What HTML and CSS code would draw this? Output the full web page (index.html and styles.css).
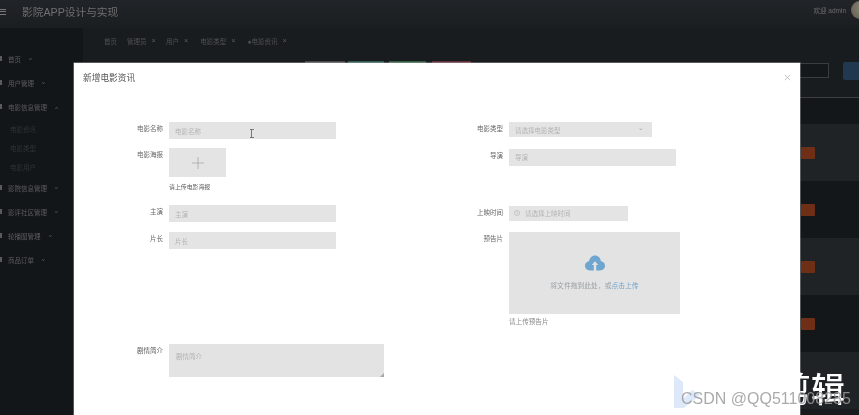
FILE: index.html
```html
<!DOCTYPE html>
<html lang="zh">
<head>
<meta charset="utf-8">
<title>影院APP设计与实现</title>
<link rel="stylesheet" href="styles.css">
</head>
<body>
<div class="screen">
  <header class="topbar">
    <div class="burger"><i></i><i></i><i></i></div>
    <div class="brand">影院APP设计与实现</div>
    <div class="welcome">欢迎 admin</div>
    <div class="avatar"></div>
  </header>
  <div class="body-row">
    <nav class="sidebar">
      <div class="menu-item"><b class="mi"></b>首页<span class="chev">⌄</span></div>
      <div class="menu-item"><b class="mi"></b>用户管理<span class="chev">⌄</span></div>
      <div class="menu-item"><b class="mi"></b>电影信息管理<span class="chev up">⌄</span></div>
      <div class="sub-item">电影资讯</div>
      <div class="sub-item">电影类型</div>
      <div class="sub-item">电影用户</div>
      <div class="menu-item"><b class="mi"></b>影院信息管理<span class="chev">⌄</span></div>
      <div class="menu-item"><b class="mi"></b>影评社区管理<span class="chev">⌄</span></div>
      <div class="menu-item"><b class="mi"></b>轮播图管理<span class="chev">⌄</span></div>
      <div class="menu-item"><b class="mi"></b>商品订单<span class="chev">⌄</span></div>
    </nav>
    <main class="main">
      <div class="tabs">
        <span class="tab">首页</span>
        <span class="tab">管理员<em>×</em></span>
        <span class="tab">用户<em>×</em></span>
        <span class="tab">电影类型<em>×</em></span>
        <span class="tab">●电影资讯<em>×</em></span>
      </div>
      <div class="toolbar">
        <span class="tb b1"></span><span class="tb b2"></span><span class="tb b3"></span><span class="tb b4"></span>
        <span class="search"></span>
        <span class="search-btn"></span>
      </div>
      <div class="table">
        <div class="thead"></div>
        <div class="trow odd"><span class="op"></span></div>
        <div class="trow"><span class="op"></span></div>
        <div class="trow odd"><span class="op"></span></div>
        <div class="trow"><span class="op"></span></div>
        <div class="trow odd"></div>
      </div>
    </main>
  </div>

  <section class="modal">
    <div class="modal-head">
      <h2 class="modal-title">新增电影资讯</h2>
      <svg class="close" viewBox="0 0 8 8" width="7" height="7"><path d="M1 1L7 7M7 1L1 7" stroke="#aaa" stroke-width=".8"/></svg>
    </div>
    <div class="form-grid">
      <div class="col">
        <div class="row r-name"><label class="lab">电影名称</label><div class="field w167 h17">电影名称</div></div>
        <div class="row r-poster"><label class="lab">电影海报</label>
          <div class="field-stack">
            <div class="poster"><svg viewBox="0 0 12 12" width="12" height="12"><path d="M6 0V12M0 6H12" stroke="#a0a0a0" stroke-width=".7"/></svg></div>
            <div class="hint dark">请上传电影海报</div>
          </div>
        </div>
        <div class="row r-actor"><label class="lab">主演</label><div class="field w167 h17">主演</div></div>
        <div class="row r-len"><label class="lab">片长</label><div class="field w167 h17">片长</div></div>
      </div>
      <div class="col">
        <div class="row r-name"><label class="lab">电影类型</label><div class="field w143 h15 between">请选择电影类型<span class="sel">⌄</span></div></div>
        <div class="row r-dir"><label class="lab">导演</label><div class="field w167 h17">导演</div></div>
        <div class="row r-date"><label class="lab">上映时间</label><div class="field w119 h15 time"><svg viewBox="0 0 8 8" width="6" height="6"><circle cx="4" cy="4" r="3.4" fill="none" stroke="#aaa" stroke-width=".7"/><path d="M4 2V4.2H5.6" fill="none" stroke="#aaa" stroke-width=".6"/></svg>请选择上映时间</div></div>
        <div class="row r-trailer"><label class="lab">预告片</label>
          <div class="field-stack">
            <div class="upload">
              <svg class="cloud" viewBox="0 0 20 16" width="20" height="16"><path d="M5 15.500C2 15.500 0 13.400 0 10.800 0 8.400 1.700 6.600 4 6.300 4.600 2.800 7 .5 10 .5c3 0 5.400 2.300 6 5.800 2.300.3 4 2.100 4 4.500 0 2.600-2 4.700-5 4.700H11.200V10h2l-3.200-3.800L6.800 10h2v5.500z" fill="#6fa6cf"/></svg>
              <div class="upload-text">将文件拖到此处，或<span class="link">点击上传</span></div>
            </div>
            <div class="hint wide">请上传预告片</div>
          </div>
        </div>
      </div>
    </div>
    <div class="row r-intro"><label class="lab dark2">剧情简介</label><div class="area">剧情简介<svg class="grip" viewBox="0 0 5 5" width="4" height="4"><path d="M5 0V5H0z" fill="#a8a8a8"/></svg></div></div>
  </section>

  <div class="cursor"></div>
  <div class="overlay-word">剪辑</div>
  <svg class="overlay-logo" viewBox="0 0 30 34" width="30" height="34"><path d="M0 0L9 7V24L18 15L26 20L10 33H0z" fill="#dde9fa"/></svg>
  <div class="watermark">CSDN @QQ511008285</div>
</div>
</body>
</html>
```
FILE: styles.css
```css
* { box-sizing: border-box; }
html, body { margin: 0; padding: 0; height: 100%; }
body { overflow: hidden; background: #16191c; }
.screen {
  position: relative;
  width: 859px;
  height: 415px;
  overflow: hidden;
  display: flex;
  flex-direction: column;
  font-family: "Liberation Sans", "Noto Sans CJK SC", sans-serif;
  font-size: 6.5px;
  color: #555;
  filter: blur(0.6px);
}
.topbar {
  height: 28px;
  flex: none;
  display: flex;
  align-items: center;
  background: linear-gradient(#212428, #1b1e21);
}
.burger { width: 6px; margin-right: 16px; display: flex; flex-direction: column; gap: 1.5px; margin-top: -5px; }
.burger i { display: block; height: 1px; background: #777; }
.brand { font-size: 10.7px; color: #6f6f6f; margin-top: -5px; }
.welcome { margin-left: auto; margin-right: 5px; color: #6c6c6c; margin-top: -8px; }
.avatar {
  width: 18px; height: 18px; border-radius: 50%; flex: none;
  margin-right: -10px; margin-top: -9px;
  background: radial-gradient(circle at 60% 40%, #8b8677, #5c5a4d);
}
.body-row { flex: 1; display: flex; min-height: 0; }
.sidebar { width: 83px; flex: none; background: #121619; padding-top: 19px; }
.menu-item {
  height: 24px; display: flex; align-items: center; padding-left: 8px;
  color: #5c5c5c; position: relative; white-space: nowrap;
}
.mi { position: absolute; left: -2px; top: 9px; width: 4px; height: 5px; background: #5a5a5a; }
.chev { margin-left: 6px; font-size: 8px; color: #4c4c4c; line-height: 1; margin-top: -3px; }
.chev.up { transform: rotate(180deg); margin-top: 3px; }
.sub-item { height: 19px; display: flex; align-items: center; padding-left: 10px; color: #303436; }
.main { flex: 1; background: #191c1f; display: flex; flex-direction: column; min-width: 0; }
.tabs { height: 33px; flex: none; padding: 0 0 8px 21px; display: flex; align-items: center; color: #4f5153; }
.tab { margin-right: 10px; white-space: nowrap; }
.tab:nth-child(3) { margin-right: 12px; }
.tab:nth-child(4) { margin-right: 12px; }
.tab em { font-style: normal; font-size: 7.5px; margin-left: 5px; position: relative; top: -1px; color: #5a5a5a; }
.toolbar { height: 37px; flex: none; display: flex; align-items: flex-start; position: relative; border-bottom: 1px solid #3c3e40; padding-left: 222px; }
.tb { height: 3px; width: 38px; margin-right: 5px; }
.b1 { background: #48494b; width: 40px; margin-right: 3px; }
.b2 { background: #335a57; width: 36px; }
.b3 { background: #355d41; width: 37px; margin-right: 6px; }
.b4 { background: #65313a; width: 39px; }
.search { position: absolute; left: 716px; top: 2px; width: 30px; height: 15px; border: 1px solid #3a3d3f; background: #15181a; }
.search-btn { position: absolute; left: 760px; top: 1px; width: 20px; height: 18px; border-radius: 2px; background: #20394f; }
.table { flex: 1; display: flex; flex-direction: column; }
.thead { height: 26px; flex: none; background: #14171a; }
.trow { height: 57px; flex: none; background: #14171a; padding-left: 718px; padding-top: 23px; }
.trow.odd { background: #1f2326; }
.op { display: block; width: 14px; height: 12px; background: #6e2f16; border-radius: 1px; }

.modal {
  position: absolute;
  left: 74px; top: 62.5px;
  width: 726px; height: 360px;
  background: #fff;
  box-shadow: 0 0 0 .6px rgba(200,200,200,.6);
}
.modal-head { height: 30px; padding: 9px 9px 0; display: flex; justify-content: space-between; align-items: flex-start; }
.modal-title { margin: 0; font-size: 8.7px; font-weight: 400; color: #555; line-height: 12px; }
.close { margin: 2px 0 0 0; }
.form-grid { display: grid; grid-template-columns: 340px 1fr; margin-top: 29.5px; }
.row { display: flex; align-items: flex-start; }
.lab { width: 89px; margin-right: 6px; flex: none; text-align: right; color: #666; line-height: 13px; white-space: nowrap; }
.dark2 { color: #555; }
.field {
  background: #e4e4e4; color: #b4b4b4; display: flex; align-items: center; padding-left: 6px; flex: none;
}
.w167 { width: 167px; }
.w143 { width: 143px; }
.w119 { width: 119px; }
.h17 { height: 17px; }
.h15 { height: 15px; }
.between { justify-content: space-between; padding-right: 8px; }
.sel { font-size: 7px; margin-top: -3px; color: #aaa; }
.time { gap: 5px; padding-left: 5px; }
.field-stack { display: flex; flex-direction: column; }
.poster { width: 57px; height: 29px; background: #e4e4e4; display: flex; align-items: center; justify-content: center; }
.hint { font-size: 5.9px; line-height: 10px; margin-top: 5px; color: #5b5b5b; }
.hint.wide { font-size: 6.6px; margin-top: 3px; color: #888; }
.r-poster { margin-top: 9px; }
.r-actor { margin-top: 13px; }
.r-len { margin-top: 10px; }
.r-dir { margin-top: 11.5px; }
.r-date { margin-top: 40px; }
.r-trailer { margin-top: 11px; }
.upload {
  width: 171px; height: 82px; background: #e3e3e3;
  display: flex; flex-direction: column; align-items: center; padding-top: 23px;
}
.cloud { display: block; }
.upload-text { margin-top: 9px; font-size: 6.8px; color: #9aa0a5; white-space: nowrap; }
.link { color: #6fa3cc; }
.r-intro { margin-top: 17px; }
.area {
  position: relative; width: 215px; height: 33px; background: #e3e3e3; color: #b0b0b0; padding: 7px 0 0 7px; flex: none;
}
.grip { position: absolute; right: 0; bottom: 0; }
.cursor {
  position: absolute; left: 249.5px; top: 129px; width: 4px; height: 9px;
  border-top: 1px solid #777; border-bottom: 1px solid #777;
  background: linear-gradient(#777, #777) center / 1px 100% no-repeat;
}
.overlay-word {
  position: absolute; left: 777px; top: 369px;
  font-size: 34px; line-height: 38px; font-weight: 500; color: #fff; white-space: nowrap;
  font-family: "Noto Sans CJK SC", sans-serif;
}
.overlay-logo { position: absolute; left: 674px; top: 375px; }
.watermark {
  position: absolute; left: 681px; top: 390px;
  font-size: 16px; line-height: 18px; color: rgba(155,155,155,.85); white-space: nowrap;
}
```
